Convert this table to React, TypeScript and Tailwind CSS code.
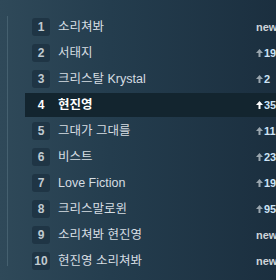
import React from "react";

type Row = { n: number; name: string; change: string; active?: boolean };

const rows: Row[] = [
  { n: 1, name: "소리쳐봐", change: "new" },
  { n: 2, name: "서태지", change: "19" },
  { n: 3, name: "크리스탈 Krystal", change: "2" },
  { n: 4, name: "현진영", change: "35", active: true },
  { n: 5, name: "그대가 그대를", change: "11" },
  { n: 6, name: "비스트", change: "23" },
  { n: 7, name: "Love Fiction", change: "19" },
  { n: 8, name: "크리스말로윈", change: "95" },
  { n: 9, name: "소리쳐봐 현진영", change: "new" },
  { n: 10, name: "현진영 소리쳐봐", change: "new" },
];

function Arrow({ white }: { white?: boolean }) {
  return (
    <svg width="7" height="8" viewBox="0 0 7 8" className="shrink-0">
      <path d="M3.5 0 L7 4 L4.5 4 L4.5 8 L2.5 8 L2.5 4 L0 4 Z" fill={white ? "#ffffff" : "#9aa6ae"} />
    </svg>
  );
}

export default function App() {
  return (
    <div
      className="relative w-[276px] h-[280px] overflow-hidden bg-[linear-gradient(90deg,#2f4959_0%,#243d4e_40%,#1b2f3f_100%)]"
      style={{ fontFamily: '"Liberation Sans", "Noto Sans CJK KR", sans-serif' }}
    >
      <div className="flex pt-[14px] pl-[7px]">
        <div className="w-[18px] border-l border-[#45606f] shrink-0 mt-[2px] h-[250px]" />
        <div className="flex flex-col flex-1">
          {rows.map((r) => (
            <div key={r.n} className="h-[26px] flex items-center">
              <div
                className={`h-[24px] w-full flex items-center pl-[7px] ${r.active ? "bg-[#13252f]" : ""}`}
              >
                <div
                  className={`w-[18px] h-[18px] rounded-[3px] flex items-center justify-center text-[12px] font-bold shrink-0 ${
                    r.active ? "text-white" : "bg-[#1f3545] text-[#c0cad1]"
                  }`}
                >
                  {r.n}
                </div>
                <div
                  className={`flex-1 ml-[8px] text-[12.5px] whitespace-nowrap ${
                    r.active ? "font-bold text-white" : "text-[#d6dde2]"
                  }`}
                >
                  {r.name}
                </div>
                <div className="w-[20px] shrink-0 flex items-center whitespace-nowrap text-[11px] font-bold">
                  {r.change === "new" ? (
                    <span className="text-[#cfd4d8]">new</span>
                  ) : (
                    <>
                      <Arrow white={r.active} />
                      <span className="ml-[1px] text-[#cde4f7]">{r.change}</span>
                    </>
                  )}
                </div>
              </div>
            </div>
          ))}
        </div>
      </div>
    </div>
  );
}
